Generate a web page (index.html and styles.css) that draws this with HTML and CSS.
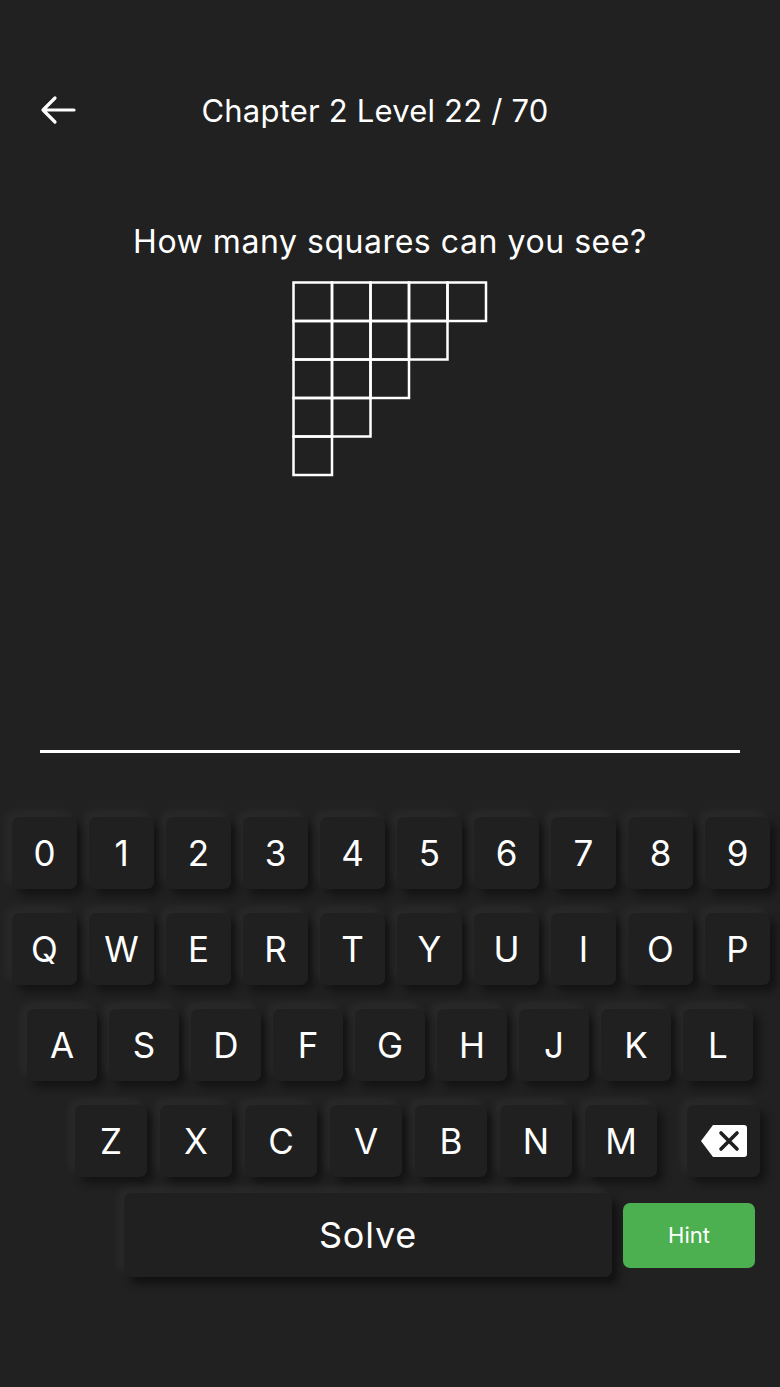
FILE: index.html
```html
<!DOCTYPE html>
<html>
<head>
<meta charset="utf-8">
<link rel="stylesheet" href="styles.css">
</head>
<body>
<div class="screen">
  <header class="topbar">
    <div class="back">
      <svg width="36" height="30" viewBox="0 0 36 30"><path d="M34 15H3M15 3L3 15L15 27" fill="none" stroke="#fff" stroke-width="3.2" stroke-linecap="round" stroke-linejoin="round"/></svg>
    </div>
    <div class="title">Chapter 2 Level 22 / 70</div>
  </header>

  <div class="question">How many squares can you see?</div>
  <div class="figure">
    <svg width="198" height="196" viewBox="0 0 198 196">
      <g fill="none" stroke="#fff" stroke-width="2.5">
        <rect x="1.5" y="1.5" width="38.5" height="38.5"/>
        <rect x="40" y="1.5" width="38.5" height="38.5"/>
        <rect x="78.5" y="1.5" width="38.5" height="38.5"/>
        <rect x="117" y="1.5" width="38.5" height="38.5"/>
        <rect x="155.5" y="1.5" width="38.5" height="38.5"/>
        <rect x="1.5" y="40" width="38.5" height="38.5"/>
        <rect x="40" y="40" width="38.5" height="38.5"/>
        <rect x="78.5" y="40" width="38.5" height="38.5"/>
        <rect x="117" y="40" width="38.5" height="38.5"/>
        <rect x="1.5" y="78.5" width="38.5" height="38.5"/>
        <rect x="40" y="78.5" width="38.5" height="38.5"/>
        <rect x="78.5" y="78.5" width="38.5" height="38.5"/>
        <rect x="1.5" y="117" width="38.5" height="38.5"/>
        <rect x="40" y="117" width="38.5" height="38.5"/>
        <rect x="1.5" y="155.5" width="38.5" height="38.5"/>
      </g>
    </svg>
  </div>

  <div class="answer-line"></div>

  <div class="keyboard">
    <div class="row row-num">
      <div class="key">0</div><div class="key">1</div><div class="key">2</div><div class="key">3</div><div class="key">4</div>
      <div class="key">5</div><div class="key">6</div><div class="key">7</div><div class="key">8</div><div class="key">9</div>
    </div>
    <div class="row row-num">
      <div class="key">Q</div><div class="key">W</div><div class="key">E</div><div class="key">R</div><div class="key">T</div>
      <div class="key">Y</div><div class="key">U</div><div class="key">I</div><div class="key">O</div><div class="key">P</div>
    </div>
    <div class="row row-mid">
      <div class="key">A</div><div class="key">S</div><div class="key">D</div><div class="key">F</div><div class="key">G</div>
      <div class="key">H</div><div class="key">J</div><div class="key">K</div><div class="key">L</div>
    </div>
    <div class="row row-low">
      <div class="key">Z</div><div class="key">X</div><div class="key">C</div><div class="key">V</div><div class="key">B</div>
      <div class="key">N</div><div class="key">M</div>
      <div class="key key-back">
        <svg width="48" height="36" viewBox="0 0 48 36"><path d="M13 2H44Q47 2 47 5V31Q47 34 44 34H13L1 18Z" fill="#fff"/><path d="M21 10L37 26M37 10L21 26" stroke="#1f1f1f" stroke-width="3.6" stroke-linecap="round"/></svg>
      </div>
    </div>
    <div class="row row-actions">
      <div class="solve">Solve</div>
      <div class="hint">Hint</div>
    </div>
  </div>
</div>
</body>
</html>
```

FILE: styles.css
```css
html, body {
  margin: 0;
  padding: 0;
  background: #212121;
}

body {
  font-family: "Inter", "Liberation Sans", sans-serif;
  color: #fff;
}

.screen {
  width: 780px;
  height: 1387px;
  overflow: hidden;
  background: #212121;
}

.topbar {
  display: flex;
  align-items: center;
  height: 40px;
  padding: 90px 106px 0 40px;
}

.back {
  width: 36px;
  height: 30px;
  display: flex;
}

.title {
  flex: 1;
  text-align: center;
  font-size: 31px;
  font-weight: 400;
  letter-spacing: 0.2px;
}

.question {
  margin-top: 92px;
  text-align: center;
  font-size: 32px;
  line-height: 40px;
  letter-spacing: 0.55px;
}

.figure {
  display: flex;
  justify-content: center;
  margin-top: 19px;
  padding-left: 1px;
}

.figure svg {
  display: block;
}

.answer-line {
  margin: 273px 40px 0 40px;
  height: 3px;
  background: #fff;
}

.keyboard {
  margin-top: 64px;
  display: flex;
  flex-direction: column;
  gap: 24px;
}

.row {
  display: flex;
}

.key {
  height: 72px;
  border-radius: 7px;
  background: #202020;
  box-shadow: -5px -5px 11px rgba(255, 255, 255, 0.05), 6px 6px 10px rgba(0, 0, 0, 0.45);
  display: flex;
  align-items: center;
  justify-content: center;
  font-size: 35px;
  font-weight: 400;
}

.row-num {
  padding-left: 12px;
  gap: 12px;
}

.row-num .key {
  width: 65px;
}

.row-mid {
  padding-left: 27px;
  gap: 12px;
}

.row-mid .key {
  width: 70px;
}

.row-low {
  padding-left: 75px;
  gap: 13px;
}

.row-low .key {
  width: 72px;
}

.row-low .key-back {
  width: 73px;
  margin-left: 17px;
}

.row-actions {
  padding-left: 124px;
  align-items: center;
  gap: 11px;
  margin-top: -8px;
}

.solve {
  width: 488px;
  height: 84px;
  border-radius: 7px;
  background: #202020;
  box-shadow: -5px -5px 11px rgba(255, 255, 255, 0.05), 6px 7px 10px rgba(0, 0, 0, 0.5);
  display: flex;
  align-items: center;
  justify-content: center;
  font-size: 36px;
  letter-spacing: 0.8px;
}

.hint {
  width: 132px;
  height: 65px;
  border-radius: 7px;
  background: #4caf50;
  display: flex;
  align-items: center;
  justify-content: center;
  font-size: 22px;
}
```
